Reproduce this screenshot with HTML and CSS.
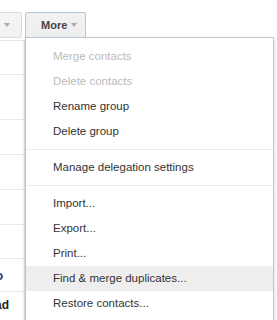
FILE: index.html
```html
<!DOCTYPE html>
<html lang="en">
<head>
    <meta charset="UTF-8">
    <meta name="viewport" content="width=device-width, initial-scale=1.0">
    <title>Contacts - More</title>
    <link rel="stylesheet" href="styles.css">
</head>
<body>
    <div class="toolbar">
        <div class="btn btn-left"><span class="arrow"></span></div>
        <div class="btn btn-more">More <span class="arrow"></span></div>
    </div>

    <div class="list">
        <div class="row r1"></div>
        <div class="row r2"></div>
        <div class="row r3"></div>
        <div class="row r4"></div>
        <div class="row r5"></div>
        <div class="row r6"></div>
        <div class="row r7"><span class="name link">o</span></div>
        <div class="row r8"><span class="name wide">ad</span></div>
    </div>

    <div class="menu">
        <div class="item disabled">Merge contacts</div>
        <div class="item disabled">Delete contacts</div>
        <div class="item">Rename group</div>
        <div class="item">Delete group</div>
        <div class="sep"></div>
        <div class="item">Manage delegation settings</div>
        <div class="sep"></div>
        <div class="item">Import...</div>
        <div class="item">Export...</div>
        <div class="item">Print...</div>
        <div class="item hover">Find &amp; merge duplicates...</div>
        <div class="item">Restore contacts...</div>
    </div>
</body>
</html>
```

FILE: styles.css
```css
* {
    margin: 0;
    padding: 0;
    box-sizing: border-box;
}

body {
    font-family: 'Liberation Sans', Arial, sans-serif;
    background: white;
    width: 277px;
    height: 320px;
    overflow: hidden;
    position: relative;
}

.toolbar {
    display: flex;
    gap: 3px;
    padding-top: 12px;
    height: 41px;
    border-bottom: 1px solid #e5e5e5;
    width: 25px;
}

.btn {
    height: 26px;
    display: flex;
    align-items: center;
    background: linear-gradient(#f5f5f5, #f1f1f1);
    border: 1px solid #dcdcdc;
    border-radius: 2px;
    color: #444;
    font-size: 11px;
    font-weight: bold;
    flex-shrink: 0;
}

.btn-left {
    width: 23px;
    margin-left: -1px;
    border-left: none;
    border-radius: 0 2px 2px 0;
    padding-left: 5px;
}

.btn-more {
    width: 61px;
    padding-left: 15px;
    border-color: #b5c4e0;
    background: linear-gradient(#f1f1f1, #eeeeee);
    position: relative;
    z-index: 2;
}

.arrow {
    display: inline-block;
    width: 0;
    height: 0;
    border-left: 3px solid transparent;
    border-right: 3px solid transparent;
    border-top: 4px solid #aaa;
    margin-left: 4px;
}

.btn-left .arrow {
    margin-left: 0;
}

.list {
    width: 25px;
    border-right: 1px solid #e5e5e5;
}

.row {
    border-bottom: 1px solid #ebebeb;
    height: 35px;
    display: flex;
    justify-content: flex-end;
    font-size: 12px;
    font-weight: bold;
    white-space: nowrap;
}

.r1 { height: 34px; }
.r2 { height: 45px; }
.r6 { height: 34px; }
.r7 {
    height: 33px;
    padding-top: 10px;
}
.r8 {
    padding-top: 6px;
    border-bottom: none;
}

.name {
    margin-right: 21px;
    color: #222;
}

.name.link {
    color: #15326b;
}

.name.wide {
    margin-right: 15px;
}

.menu {
    position: absolute;
    left: 25px;
    top: 37px;
    width: 249px;
    height: 283px;
    background: white;
    border: 1px solid #c6c6c6;
    border-bottom: none;
    box-shadow: 0 2px 4px rgba(0, 0, 0, 0.2);
    padding: 6px 0;
    z-index: 1;
}

.item {
    height: 25px;
    line-height: 25px;
    padding-left: 27px;
    font-size: 11.5px;
    color: #333;
    white-space: nowrap;
}

.item.disabled {
    color: #bbb;
}

.item.hover {
    background: #eeeeee;
}

.sep {
    border-top: 1px solid #ebebeb;
    margin: 5px 0;
}
```
